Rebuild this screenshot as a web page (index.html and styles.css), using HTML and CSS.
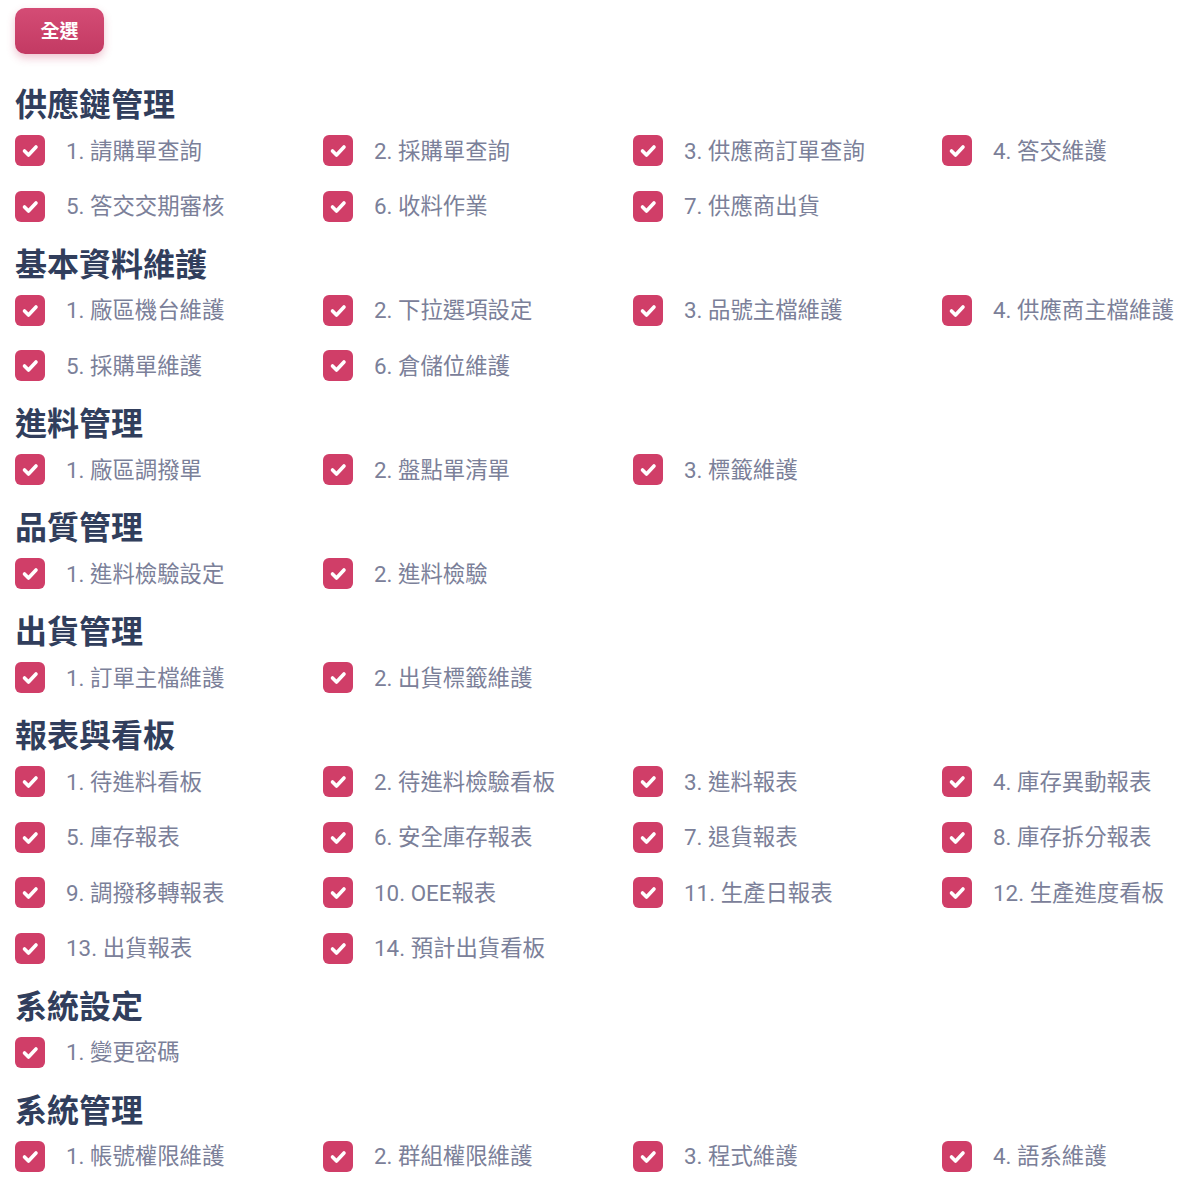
FILE: index.html
```html
<!DOCTYPE html>
<html lang="zh-Hant">
<head>
    <meta charset="UTF-8">
    <meta name="viewport" content="width=device-width, initial-scale=1.0">
    <title>權限設定</title>
    <link rel="stylesheet" href="styles.css">
</head>
<body>
    <div class="perm-page">
        <button type="button" class="btn-all">全選</button>

        <div class="group">
            <h2>供應鏈管理</h2>
            <div class="items">
                <label class="item"><span class="box"></span>1. 請購單查詢</label>
                <label class="item"><span class="box"></span>2. 採購單查詢</label>
                <label class="item"><span class="box"></span>3. 供應商訂單查詢</label>
                <label class="item"><span class="box"></span>4. 答交維護</label>
                <label class="item"><span class="box"></span>5. 答交交期審核</label>
                <label class="item"><span class="box"></span>6. 收料作業</label>
                <label class="item"><span class="box"></span>7. 供應商出貨</label>
            </div>
        </div>

        <div class="group">
            <h2>基本資料維護</h2>
            <div class="items">
                <label class="item"><span class="box"></span>1. 廠區機台維護</label>
                <label class="item"><span class="box"></span>2. 下拉選項設定</label>
                <label class="item"><span class="box"></span>3. 品號主檔維護</label>
                <label class="item"><span class="box"></span>4. 供應商主檔維護</label>
                <label class="item"><span class="box"></span>5. 採購單維護</label>
                <label class="item"><span class="box"></span>6. 倉儲位維護</label>
            </div>
        </div>

        <div class="group">
            <h2>進料管理</h2>
            <div class="items">
                <label class="item"><span class="box"></span>1. 廠區調撥單</label>
                <label class="item"><span class="box"></span>2. 盤點單清單</label>
                <label class="item"><span class="box"></span>3. 標籤維護</label>
            </div>
        </div>

        <div class="group">
            <h2>品質管理</h2>
            <div class="items">
                <label class="item"><span class="box"></span>1. 進料檢驗設定</label>
                <label class="item"><span class="box"></span>2. 進料檢驗</label>
            </div>
        </div>

        <div class="group">
            <h2>出貨管理</h2>
            <div class="items">
                <label class="item"><span class="box"></span>1. 訂單主檔維護</label>
                <label class="item"><span class="box"></span>2. 出貨標籤維護</label>
            </div>
        </div>

        <div class="group">
            <h2>報表與看板</h2>
            <div class="items">
                <label class="item"><span class="box"></span>1. 待進料看板</label>
                <label class="item"><span class="box"></span>2. 待進料檢驗看板</label>
                <label class="item"><span class="box"></span>3. 進料報表</label>
                <label class="item"><span class="box"></span>4. 庫存異動報表</label>
                <label class="item"><span class="box"></span>5. 庫存報表</label>
                <label class="item"><span class="box"></span>6. 安全庫存報表</label>
                <label class="item"><span class="box"></span>7. 退貨報表</label>
                <label class="item"><span class="box"></span>8. 庫存拆分報表</label>
                <label class="item"><span class="box"></span>9. 調撥移轉報表</label>
                <label class="item"><span class="box"></span>10. OEE報表</label>
                <label class="item"><span class="box"></span>11. 生產日報表</label>
                <label class="item"><span class="box"></span>12. 生產進度看板</label>
                <label class="item"><span class="box"></span>13. 出貨報表</label>
                <label class="item"><span class="box"></span>14. 預計出貨看板</label>
            </div>
        </div>

        <div class="group">
            <h2>系統設定</h2>
            <div class="items">
                <label class="item"><span class="box"></span>1. 變更密碼</label>
            </div>
        </div>

        <div class="group">
            <h2>系統管理</h2>
            <div class="items">
                <label class="item"><span class="box"></span>1. 帳號權限維護</label>
                <label class="item"><span class="box"></span>2. 群組權限維護</label>
                <label class="item"><span class="box"></span>3. 程式維護</label>
                <label class="item"><span class="box"></span>4. 語系維護</label>
            </div>
        </div>
    </div>

    <script>
        // draw the check mark into every box
        const tick = '<svg width="30" height="31" viewBox="0 0 30 31"><path d="M9.5 16 L13.5 20 L21 12" fill="none" stroke="#fff" stroke-width="3.6" stroke-linecap="round" stroke-linejoin="round"/></svg>'
        document.querySelectorAll('.box').forEach(function(e){
            e.innerHTML = tick
        })
    </script>
</body>
</html>
```

FILE: styles.css
```css
body, html {
    margin: 0;
    font-family: Roboto, "Noto Sans CJK TC", sans-serif;
    background: #fff;
}
.perm-page {
    padding: 8px 0 0 15px;
    overflow: hidden;
}
.btn-all {
    width: 89px;
    height: 46px;
    padding: 0 0 3px 0;
    border: none;
    border-radius: 10px;
    background: linear-gradient(180deg, #d44c75 0%, #c33a63 100%);
    box-shadow: 0 4px 8px rgba(200, 60, 100, 0.3);
    color: white;
    font-family: "Noto Sans CJK TC", sans-serif;
    font-size: 19px;
    font-weight: bold;
    cursor: pointer;
    display: block;
    margin-bottom: 28px;
}
.group {
    margin-bottom: 22px;
}
.group h2 {
    margin: 0 0 11px 0;
    font-family: "Noto Sans CJK TC", sans-serif;
    font-size: 32px;
    line-height: 40px;
    font-weight: bold;
    color: #313e5c;
}
.items {
    display: grid;
    grid-template-columns: 308px 310px 309px 1fr;
    row-gap: 24.6px;
}
.item {
    display: flex;
    align-items: center;
    height: 31px;
    font-size: 22.4px;
    color: #7b8099;
    white-space: nowrap;
    cursor: pointer;
}
.box {
    width: 30px;
    height: 31px;
    border-radius: 6px;
    background-color: #d03e68;
    margin: 4px 21px 0 0;
    flex-shrink: 0;
}
.box svg {
    display: block;
}
```
